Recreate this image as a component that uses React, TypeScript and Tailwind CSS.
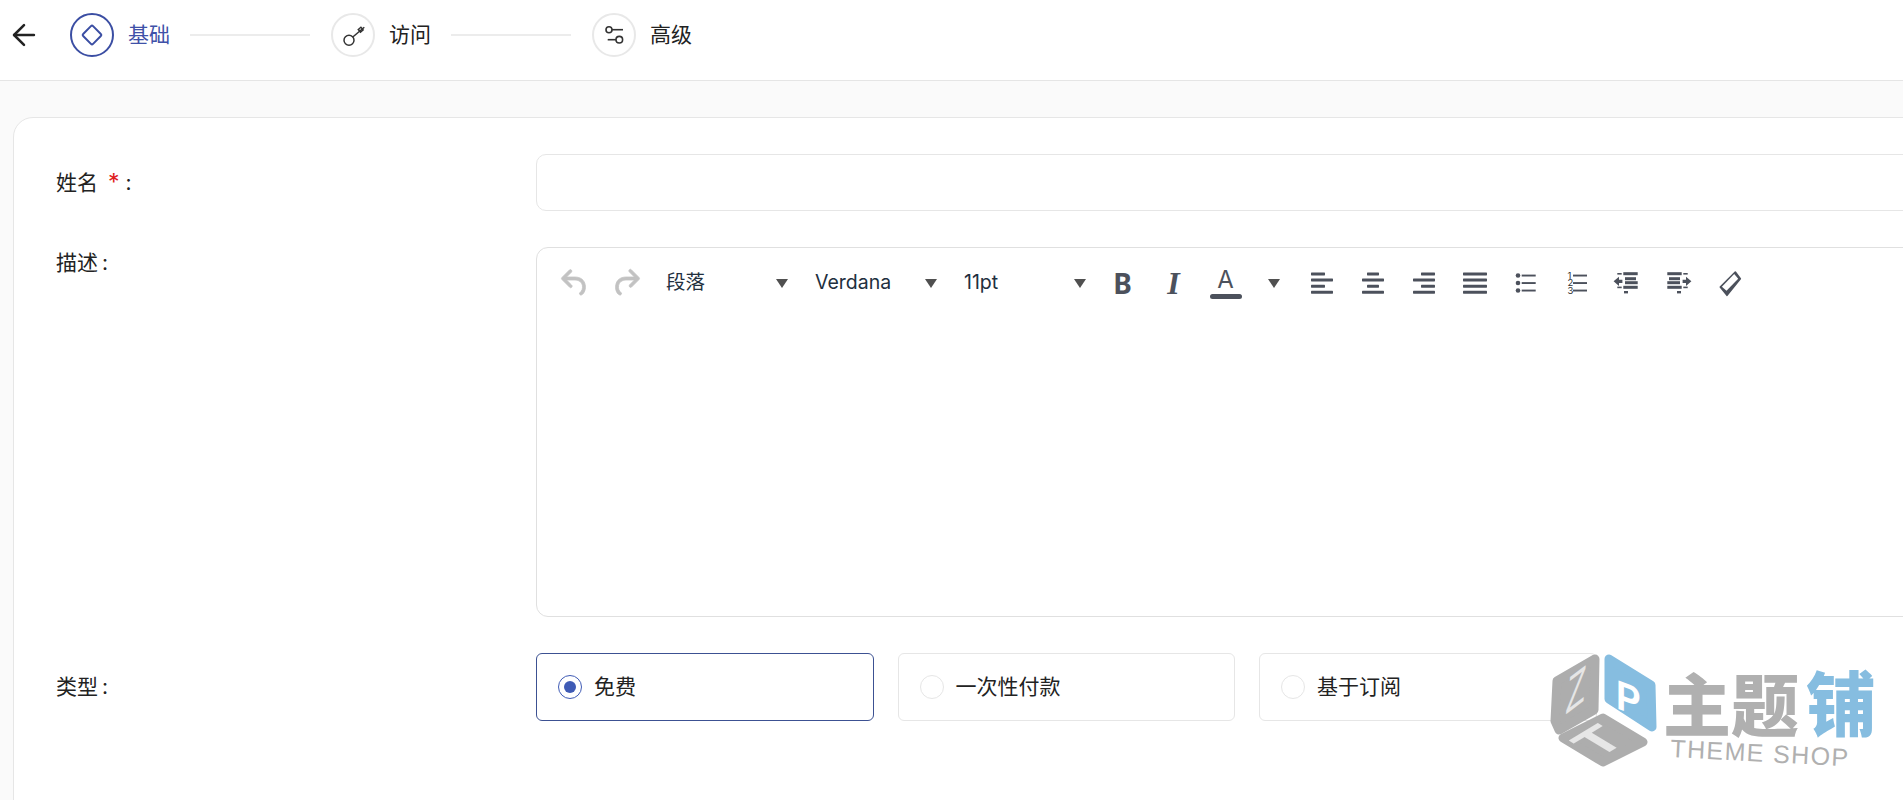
import { ArrowLeft } from "lucide-react";
import type { ReactNode } from "react";

const FONT = "font-['Inter','Noto_Sans_CJK_SC',sans-serif]";
const INK = "#4c515c";

function Glyph({ children, mirror }: { children: ReactNode; mirror?: boolean }) {
  return (
    <svg width="34" height="34" viewBox="0 0 34 34" fill={INK} className={mirror ? "-scale-x-100" : ""}>
      {children}
    </svg>
  );
}

function Bars({ rows }: { rows: [number, number, number][] }) {
  return (
    <>
      {rows.map(([x, w, y]) => (
        <rect key={`${x}-${y}`} x={x} y={y} width={w} height="3" rx="0.6" />
      ))}
    </>
  );
}

function ToolButton({ children, w = "w-[51px]" }: { children: ReactNode; w?: string }) {
  return <div className={`${w} h-10 flex items-center justify-center shrink-0`}>{children}</div>;
}

function Caret() {
  return (
    <svg width="12" height="9" viewBox="0 0 12 9" fill="#505050">
      <path d="M0 0h12L6 9z" />
    </svg>
  );
}

function Select({ label }: { label: string }) {
  return (
    <div className="w-[149px] h-10 pl-[15px] pr-[12px] flex items-center justify-between shrink-0 text-[#222f3e]">
      <span className="text-[19.5px] leading-[28px] -translate-y-[1px]">{label}</span>
      <Caret />
    </div>
  );
}

function Toolbar() {
  return (
    <div className="flex items-center pl-3 pt-[15px]">
      <ToolButton>
        <svg width="36" height="36" viewBox="0 0 24 24" fill="#c2c2c2" stroke="#c2c2c2" strokeWidth="0.5">
          <path d="M6.4 8H12c3.7 0 6.2 2 6.8 5.1.6 2.7-.4 5.6-2.3 6.8a1 1 0 0 1-1-1.8c1.1-.6 1.8-2.7 1.4-4.6-.5-2.1-2.1-3.5-4.9-3.5H6.4l3.3 3.3a1 1 0 1 1-1.4 1.4l-5-5a1 1 0 0 1 0-1.4l5-5a1 1 0 0 1 1.4 1.4L6.4 8Z" />
        </svg>
      </ToolButton>
      <ToolButton>
        <svg width="36" height="36" viewBox="0 0 24 24" fill="#c2c2c2" stroke="#c2c2c2" strokeWidth="0.5">
          <path d="M17.6 10H12c-2.8 0-4.4 1.4-4.9 3.5-.4 2 .3 4 1.4 4.6a1 1 0 1 1-1 1.8c-2-1.2-2.9-4.1-2.3-6.8.6-3 3-5.1 6.8-5.1h5.6l-3.3-3.3a1 1 0 1 1 1.4-1.4l5 5a1 1 0 0 1 0 1.4l-5 5a1 1 0 0 1-1.4-1.4l3.3-3.3Z" />
        </svg>
      </ToolButton>
      <Select label="段落" />
      <Select label="Verdana" />
      <Select label="11pt" />
      <ToolButton>
        <span className="font-['Noto_Sans',sans-serif] font-bold text-[28px] leading-none text-[#4c515c] -translate-x-[1px]">B</span>
      </ToolButton>
      <ToolButton>
        <span className="font-['Liberation_Serif',serif] font-bold italic text-[32px] leading-none text-[#4c515c] -translate-x-[1px]">I</span>
      </ToolButton>
      <ToolButton>
        <div className="flex flex-col items-center">
          <span className="text-[24px] leading-[26px] text-[#4c515c]">A</span>
          <div className="w-8 h-[5px] rounded-full bg-[#4c515c] mt-[1px]" />
        </div>
      </ToolButton>
      <ToolButton w="w-[45px]">
        <Caret />
      </ToolButton>
      <ToolButton>
        <Glyph>
          <Bars rows={[[6, 14, 6.4], [6, 22, 12.4], [6, 14, 18.7], [6, 22, 24.7]]} />
        </Glyph>
      </ToolButton>
      <ToolButton>
        <Glyph>
          <Bars rows={[[11, 12, 6.4], [6, 22, 12.4], [11, 12, 18.7], [6, 22, 24.7]]} />
        </Glyph>
      </ToolButton>
      <ToolButton>
        <Glyph>
          <Bars rows={[[14, 14, 6.4], [6, 22, 12.4], [14, 14, 18.7], [6, 22, 24.7]]} />
        </Glyph>
      </ToolButton>
      <ToolButton>
        <Glyph>
          <Bars rows={[[5, 24, 6.4], [5, 24, 12.4], [5, 24, 18.7], [5, 24, 24.7]]} />
        </Glyph>
      </ToolButton>
      <ToolButton>
        <Glyph>
          <circle cx="9" cy="9.5" r="2.3" />
          <circle cx="9" cy="17" r="2.3" />
          <circle cx="9" cy="24.5" r="2.3" />
          <rect x="12.7" y="8.6" width="14" height="1.9" />
          <rect x="12.7" y="16.1" width="14" height="1.9" />
          <rect x="12.7" y="23.6" width="14" height="1.9" />
        </Glyph>
      </ToolButton>
      <ToolButton>
        <Glyph>
          <text x="7.5" y="12.5" fontSize="9.5" fill="#333">1</text>
          <text x="7.5" y="20" fontSize="9.5" fill="#333">2</text>
          <text x="7.5" y="27.5" fontSize="9.5" fill="#333">3</text>
          <rect x="13" y="8.6" width="14" height="1.9" />
          <rect x="13" y="16.1" width="14" height="1.9" />
          <rect x="13" y="23.6" width="14" height="1.9" />
        </Glyph>
      </ToolButton>
      <ToolButton>
        <span className="-translate-x-[2px]">
          <Glyph>
            <IndentMarks />
          </Glyph>
        </span>
      </ToolButton>
      <ToolButton>
        <Glyph mirror>
          <IndentMarks />
        </Glyph>
      </ToolButton>
      <ToolButton>
        <svg width="34" height="34" viewBox="0 0 34 34">
          <path d="M22.3 6l5 6.7L14 29.3 7.3 21z" fill={INK} stroke={INK} strokeWidth="1.6" strokeLinejoin="round" />
          <path d="M21.2 8l4 4.8-11.7 11.9-4.6-4z" fill="#fff" strokeLinejoin="round" />
        </svg>
      </ToolButton>
    </div>
  );
}

function IndentMarks() {
  return (
    <>
      <rect x="14.3" y="6.2" width="14.4" height="3" />
      <rect x="16" y="11.2" width="11" height="3" />
      <rect x="16" y="15.2" width="12.7" height="3" />
      <rect x="14.3" y="19.8" width="14.4" height="3" />
      <rect x="15" y="25" width="4" height="2.4" />
      <rect x="8.3" y="7" width="4.4" height="1.6" />
      <rect x="8.3" y="20.6" width="4.4" height="1.6" />
      <path d="M4.6 15.3l5.4-4.6v3h3.4v3.2h-3.4v3z" />
    </>
  );
}

function Step({ icon, label, active }: { icon: ReactNode; label: string; active?: boolean }) {
  return (
    <div className="flex items-center gap-[14px] shrink-0">
      <div
        className={`w-11 h-11 rounded-full border-2 flex items-center justify-center ${
          active ? "border-[#3b4ea3]" : "border-[#e8e8e8]"
        }`}
      >
        {icon}
      </div>
      <span className={`text-[21px] ${active ? "text-[#3f51a8]" : "text-[#222]"}`}>{label}</span>
    </div>
  );
}

function Connector() {
  return <div className="w-[120px] h-[2px] bg-[#ececec] ml-[20px] mr-[21px] shrink-0" />;
}

function RadioCard({ label, active }: { label: string; active?: boolean }) {
  return (
    <div
      className={`w-[337.5px] h-[68px] rounded-[6px] border flex items-center pl-[21px] gap-[12px] shrink-0 ${
        active ? "border-[#3c5192]" : "border-[#e6e6e6]"
      }`}
    >
      <div
        className={`w-6 h-6 rounded-full border flex items-center justify-center ${
          active ? "border-[#3f5bb5]" : "border-[#e6e6e6]"
        }`}
      >
        {active && <div className="w-3 h-3 rounded-full bg-[#3f5bb5]" />}
      </div>
      <span className="text-[21px] text-[#222]">{label}</span>
    </div>
  );
}

function Watermark() {
  return (
    <svg className="absolute left-[1540px] top-[645px]" width="345" height="130" viewBox="0 0 345 130">
      <g strokeLinejoin="round" strokeWidth="9">
        <path d="M55 14L17 36 15 76 19 85 54 65z" fill="#adadad" stroke="#adadad" />
        <path d="M69 14L111 40 112 82 69 54z" fill="#86bde0" stroke="#86bde0" />
        <path d="M63 73L103 97 63 117 23 93z" fill="#adadad" stroke="#adadad" />
      </g>
      <text transform="matrix(.72 -.55 -.1 1.2 25 70)" fontFamily="Liberation Sans" fontSize="44" fill="#e6e6e6">
        Z
      </text>
      <text transform="matrix(.8 .3 0 .9 76 63)" fontFamily="Liberation Sans" fontWeight="700" fontSize="46" fill="#ffffff">
        P
      </text>
      <text transform="matrix(1.23 -.74 1.08 .66 58 114)" fontFamily="Liberation Sans" fontWeight="700" fontSize="40" fill="#e6e6e6">
        T
      </text>
      <text x="123" y="86" fontFamily="Noto Sans CJK SC" fontWeight="900" fontSize="68" fill="#b0b0b0">
        主题
      </text>
      <text x="266" y="86" fontFamily="Noto Sans CJK SC" fontWeight="900" fontSize="70" fill="#86bde0">
        铺
      </text>
      <text
        transform="rotate(3 130 112)"
        x="130"
        y="112"
        fontFamily="Liberation Sans"
        fontSize="25"
        textLength="178"
        fill="#b0b0b0"
      >
        THEME SHOP
      </text>
    </svg>
  );
}

export default function App() {
  return (
    <div className={`relative w-full h-screen overflow-hidden bg-[#fafafa] ${FONT}`}>
      <div className="h-[81px] bg-white border-b border-[#e5e5e5] flex items-center pl-[7px] pb-[10px]">
        <ArrowLeft size={34} strokeWidth={1.8} className="text-[#222] shrink-0 mr-[29px]" />
        <Step
          active
          label="基础"
          icon={
            <svg width="28" height="28" viewBox="0 0 28 28" fill="none" stroke="#3b4ea3" strokeWidth="2">
              <rect x="7" y="7" width="14" height="14" rx="1.5" transform="rotate(45 14 14)" />
            </svg>
          }
        />
        <Connector />
        <Step
          label="访问"
          icon={
            <svg width="44" height="44" viewBox="0 0 44 44" fill="none" stroke="#333" strokeWidth="1.5" className="-m-[2px]">
              <circle cx="18" cy="27.3" r="5" />
              <path d="M21.8 24L33.3 14.3" />
              <rect x="28" y="15" width="3.4" height="3.4" transform="rotate(-40 29.7 16.7)" />
            </svg>
          }
        />
        <Connector />
        <Step
          label="高级"
          icon={
            <svg width="44" height="44" viewBox="0 0 44 44" fill="none" stroke="#333" strokeWidth="1.6" className="-m-[2px]">
              <circle cx="17" cy="16.7" r="3" />
              <path d="M20 16.7H31" />
              <circle cx="27.3" cy="26.7" r="3.3" />
              <path d="M15.7 26.7H24" />
            </svg>
          }
        />
      </div>

      <div className="w-[2200px] ml-[13px] mt-[36px] h-[800px] bg-white border border-[#e6e6e6] rounded-[20px] pt-[36px] pl-[42px] flex flex-col gap-[36px]">
        <div className="flex items-center">
          <label className="w-[480px] shrink-0 text-[21px] text-[#222]">
            姓名<span className="text-[#e02020] text-[23px] ml-[10px] leading-none">*</span>
            <span className="ml-[6px]">:</span>
          </label>
          <div className="flex-1 h-[57px] mr-[40px] border border-[#e6e6e6] rounded-[10px]" />
        </div>
        <div className="flex">
          <label className="w-[480px] shrink-0 text-[21px] text-[#222]">
            描述<span className="ml-[4px]">:</span>
          </label>
          <div className="flex-1 h-[370px] mr-[40px] border border-[#e0e0e0] rounded-[12px]">
            <Toolbar />
          </div>
        </div>
        <div className="flex items-center">
          <label className="w-[480px] shrink-0 text-[21px] text-[#222]">
            类型<span className="ml-[4px]">:</span>
          </label>
          <div className="flex gap-[24px]">
            <RadioCard active label="免费" />
            <RadioCard label="一次性付款" />
            <RadioCard label="基于订阅" />
          </div>
        </div>
      </div>

      <Watermark />
    </div>
  );
}
